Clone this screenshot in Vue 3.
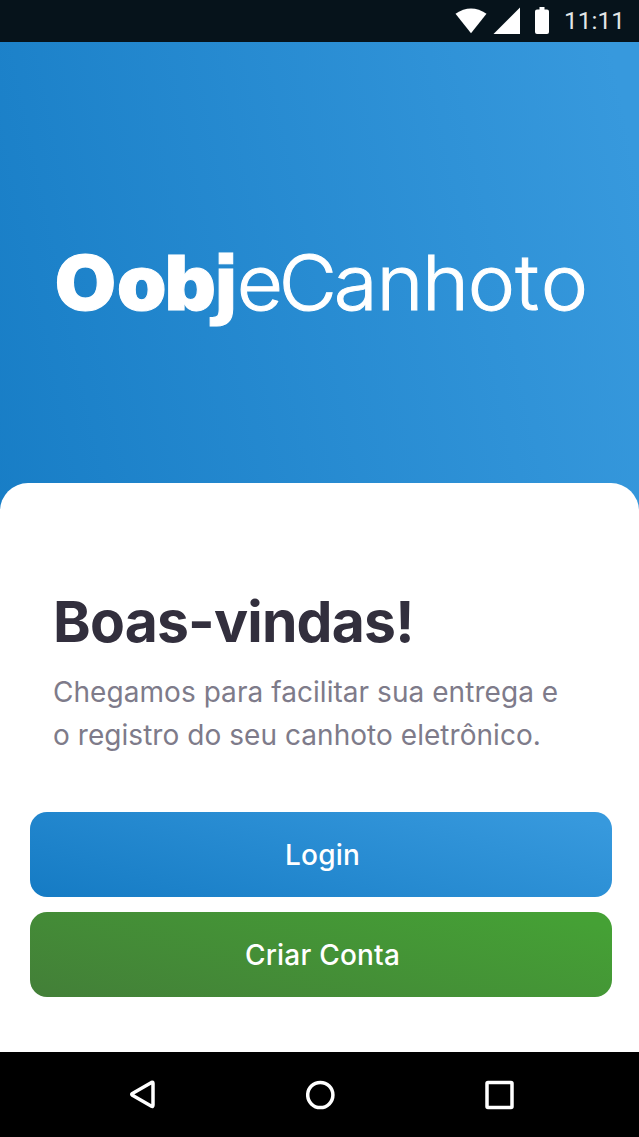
<template>
  <div class="screen">
    <!-- Status bar -->
    <header class="status-bar">
      <svg class="status-icons" width="96" height="42" viewBox="0 0 96 42">
        <path d="M0.5 13.800Q16 3 31.500 13.800L16 33.200Z" />
        <path d="M65 7.500V34H38.500Z" />
        <path d="M84.500 7h5v2.500h2.500q2 0 2 2V32q0 2-2 2H82q-2 0-2-2V11.500q0-2 2-2h2.500Z" />
      </svg>
      <span class="clock">{{ clock }}</span>
    </header>

    <!-- Logo -->
    <section class="hero">
      <svg class="logo" width="540" height="90" viewBox="0 0 540 90" role="img">
        <text class="logo-bold" x="1.700 61.500 107.500 153.500" y="69">Oob<tspan class="logo-j">j</tspan></text>
        <text class="logo-light" x="175 215 267.500 308 351.500 395 440.300 464.500" y="69">eCanhoto</text>
      </svg>
    </section>

    <!-- Welcome card -->
    <main class="card">
      <h1 class="title">Boas-vindas!</h1>
      <p class="subtitle">Chegamos para facilitar sua entrega e<br />o registro do seu canhoto eletrônico.</p>
      <div class="actions">
        <button
          v-for="action in actions"
          :key="action.name"
          class="button"
          :class="action.name"
        >
          {{ action.label }}
        </button>
      </div>
    </main>

    <!-- Android navigation -->
    <nav class="nav-bar">
      <svg class="nav-icon" width="30" height="30" viewBox="0 0 30 30">
        <path d="M24.500 2.400Q26 1.700 26 3.400V25Q26 27 24.500 26.200L5.400 15.300Q4 14.300 5.400 13.400Z" />
      </svg>
      <svg class="nav-icon" width="30" height="30" viewBox="0 0 30 30">
        <circle cx="14.300" cy="15" r="12.600" />
      </svg>
      <svg class="nav-icon" width="30" height="30" viewBox="0 0 30 30">
        <rect x="3" y="2.500" width="25" height="25" rx="1" />
      </svg>
    </nav>
  </div>
</template>

<script setup>
import { ref } from 'vue';

const clock = ref('11:11');

const actions = [
  { name: 'login', label: 'Login' },
  { name: 'register', label: 'Criar Conta' },
];
</script>

<style>
body {
  margin: 0;
}
</style>

<style scoped>
.screen {
  display: flex;
  flex-direction: column;
  width: 639px;
  height: 1137px;
  overflow: hidden;
  background: linear-gradient(78deg, #157bc4 -9%, #3799dd 95%) 0 0 / 100% 520px no-repeat;
  font-family: 'Inter', sans-serif;
}

/* Status bar */
.status-bar {
  display: flex;
  align-items: flex-start;
  justify-content: flex-end;
  height: 42px;
  padding-right: 14px;
  box-sizing: border-box;
  background: #06131b;
}

.status-icons {
  fill: #fff;
}

.clock {
  width: 74px;
  text-align: right;
  font-family: 'Roboto', sans-serif;
  font-size: 24.5px;
  font-weight: 400;
  line-height: 42px;
  color: #e2e5e6;
}

/* Logo */
.hero {
  flex: 0 0 441px;
  padding: 199px 0 0 53px;
  box-sizing: border-box;
}

.logo {
  display: block;
  overflow: visible;
  fill: #fff;
  font-size: 76px;
}

.logo-bold {
  font-weight: 900;
  stroke: #fff;
  stroke-width: 1;
  transform: scaleX(1.04);
}

.logo-j {
  font-family: 'DejaVu Sans', sans-serif;
  font-size: 74px;
  font-weight: 700;
}

.logo-light {
  font-weight: 300;
  stroke: #fff;
  stroke-width: 1;
  transform: scaleX(1.05);
}

/* Welcome card */
.card {
  height: 569px;
  padding: 104px 27px 0 30px;
  box-sizing: border-box;
  border-radius: 28px 28px 0 0;
  background: #fff;
}

.title {
  margin: 0 0 0 23px;
  font-size: 57px;
  font-weight: 700;
  line-height: 69px;
  letter-spacing: -0.8px;
  color: #322f3d;
}

.subtitle {
  margin: 15px 0 0 23px;
  font-size: 28px;
  line-height: 43px;
  letter-spacing: 0.05px;
  white-space: nowrap;
  color: #7e7b8a;
}

.actions {
  display: grid;
  gap: 14.5px;
  margin-top: 55.2px;
}

.button {
  height: 85px;
  padding: 1px 0 0 3px;
  border: none;
  border-radius: 17px;
  font-family: 'Inter', sans-serif;
  font-size: 28px;
  font-weight: 450;
  letter-spacing: 0.2px;
  color: #fff;
  cursor: pointer;
}

.login {
  background: linear-gradient(16deg, #157bc4, #3799dd 94%);
}

.register {
  background: linear-gradient(16deg, #437f38, #45a135 94%);
}

/* Android navigation */
.nav-bar {
  display: flex;
  justify-content: space-between;
  align-items: center;
  height: 85px;
  padding: 0 125px 0 127px;
  box-sizing: border-box;
  background: #000;
}

.nav-icon {
  fill: none;
  stroke: #fff;
  stroke-width: 3.5;
  stroke-linejoin: round;
}
</style>
